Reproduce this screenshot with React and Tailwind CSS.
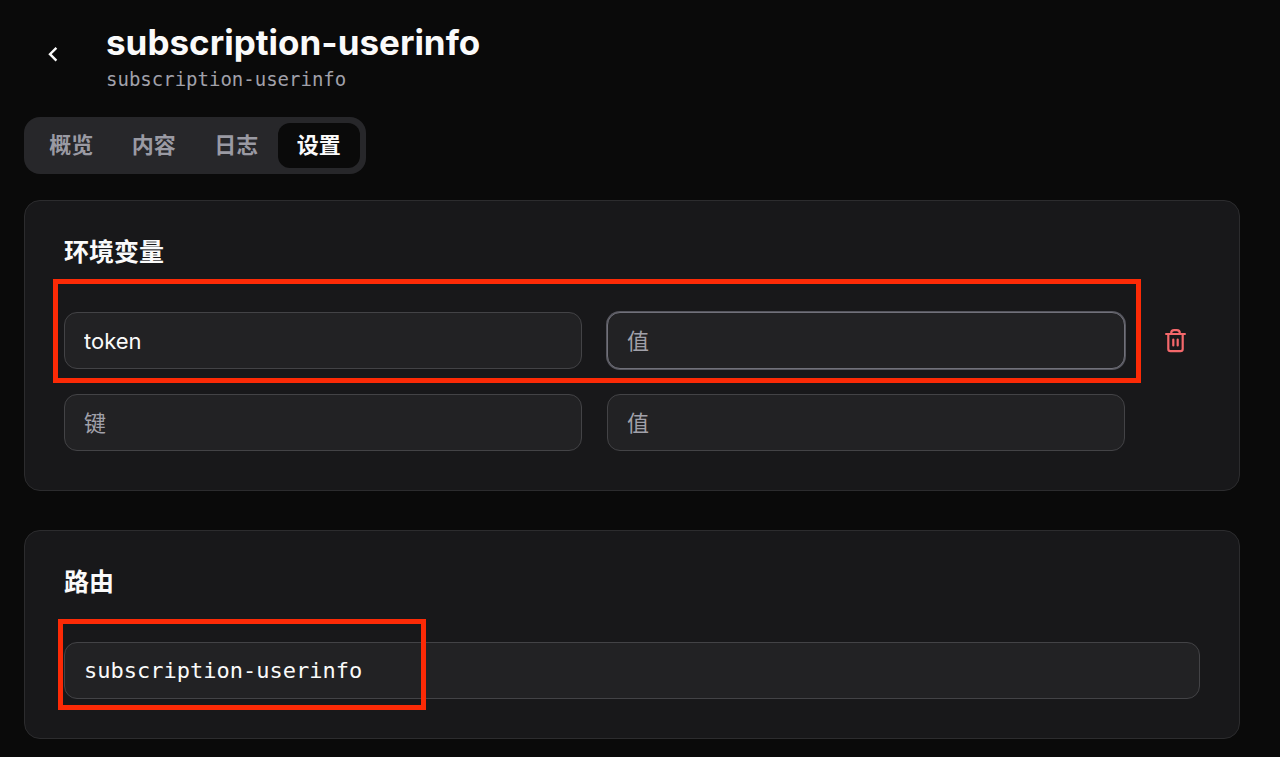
const field =
  "h-[57px] w-full min-w-0 rounded-[13px] border border-[#434346] bg-[#222224] px-[19px] text-[22px] text-[#fafafa] outline-none placeholder:text-[#a1a1aa] placeholder:opacity-100";
const focusedField =
  "h-[57px] w-full min-w-0 rounded-[13px] border border-[#71717a] bg-[#222224] px-[19px] text-[22px] text-[#fafafa] ring-1 ring-[#56565e] outline-none placeholder:text-[#a1a1aa] placeholder:opacity-100";
const monoField =
  "h-[57px] w-full min-w-0 rounded-[13px] border border-[#434346] bg-[#222224] px-[19px] font-['DejaVu_Sans_Mono',monospace] text-[22px] text-[#fafafa] outline-none";

const tabs = ["概览", "内容", "日志", "设置"];

function BackIcon() {
  return (
    <svg width="26" height="26" viewBox="0 0 26 26" fill="none" stroke="currentColor" strokeWidth="2.4" aria-hidden="true">
      <path d="M16.4 7.8 10 14.2l6.4 6.4" />
    </svg>
  );
}

function TrashIcon() {
  return (
    <svg
      width="26"
      height="26"
      viewBox="0 0 26 26"
      fill="none"
      stroke="currentColor"
      strokeWidth="2.2"
      strokeLinecap="round"
      strokeLinejoin="round"
      aria-hidden="true"
    >
      <path d="M4.1 6h18.8" />
      <path d="M6.3 6v15a2.2 2.2 0 0 0 2.2 2.2h10a2.2 2.2 0 0 0 2.2-2.2V6" />
      <path d="M9.2 5.8v-.7a3 3 0 0 1 3-3h2.6a3 3 0 0 1 3 3v.7" />
      <path d="M11.3 11.6v5.8M15.7 11.6v5.8" />
    </svg>
  );
}

function Tabs({ active }) {
  return (
    <div role="tablist" className="grid h-[57px] w-[342px] grid-cols-4 rounded-[16px] bg-[#27272a] p-[6px]">
      {tabs.map((tab) => (
        <button
          key={tab}
          type="button"
          role="tab"
          aria-selected={tab === active}
          className={
            tab === active
              ? "rounded-[12px] bg-[#0a0a0a] text-[22px] font-semibold text-[#fafafa]"
              : "rounded-[12px] text-[22px] font-semibold text-[#9a9aa3]"
          }
        >
          {tab}
        </button>
      ))}
    </div>
  );
}

function Card({ title, children }) {
  return (
    <section className="rounded-[16px] border border-[#2c2c2e] bg-[#18181a] p-[39px]">
      <h2 className="mb-[47px] text-[25px] leading-[25px] font-bold text-[#fafafa]">{title}</h2>
      {children}
    </section>
  );
}

export default function App() {
  return (
    <div className="min-h-screen bg-[#0a0a0a] pt-6 pr-10 pb-5 pl-6 font-[Inter,'Noto_Sans_CJK_SC',sans-serif] text-[#fafafa]">
      <header className="mb-[25px] flex items-start gap-[25px]">
        <button type="button" aria-label="返回" className="flex size-[57px] items-center justify-center">
          <BackIcon />
        </button>
        <div>
          <h1 className="text-[35px] leading-[36px] font-bold">subscription-userinfo</h1>
          <p className="mt-[7px] font-['DejaVu_Sans_Mono',monospace] text-[19px] leading-[25px] text-[#a1a1aa]">
            subscription-userinfo
          </p>
        </div>
      </header>

      <Tabs active="设置" />

      <main className="mt-[26px] flex flex-col gap-[39px]">
        <Card title="环境变量">
          <div className="flex flex-col gap-[25px]">
            <div className="flex items-center gap-[25px]">
              <div className="relative grid flex-1 grid-cols-2 gap-[25px]">
                <input aria-label="键" placeholder="键" defaultValue="token" className={field} />
                <input aria-label="值" placeholder="值" className={focusedField} />
                <div className="pointer-events-none absolute -top-[33px] -right-[16px] -bottom-[14px] -left-[11px] border-[5px] border-[#fc2a06]" />
              </div>
              <button type="button" aria-label="删除" className="flex size-[50px] items-center justify-center text-[#f4686b]">
                <TrashIcon />
              </button>
            </div>
            <div className="mr-[75px] grid grid-cols-2 gap-[25px]">
              <input aria-label="键" placeholder="键" className={field} />
              <input aria-label="值" placeholder="值" className={field} />
            </div>
          </div>
        </Card>

        <Card title="路由">
          <div className="relative">
            <input aria-label="路由" defaultValue="subscription-userinfo" className={monoField} />
            <div className="pointer-events-none absolute -top-[23px] -bottom-[11px] -left-[6px] w-[368px] border-[5px] border-[#fc2a06]" />
          </div>
        </Card>
      </main>
    </div>
  );
}
